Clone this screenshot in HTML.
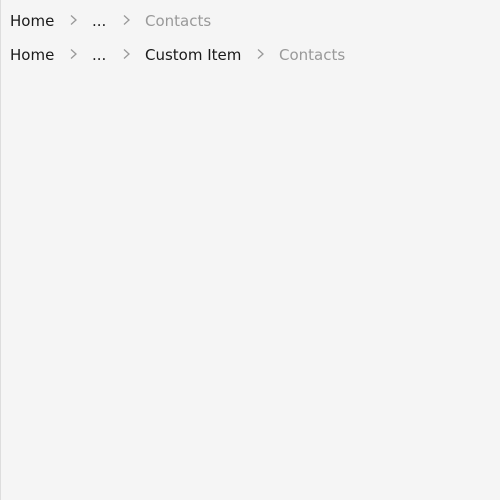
<!DOCTYPE html>
<html><head><style>
html,body{margin:0;width:500px;height:500px;background:#f5f5f5;overflow:hidden}
body{border-left:1px solid #ddd;box-sizing:border-box;position:relative;font-family:"DejaVu Sans",sans-serif;font-size:15px}
span{position:absolute;line-height:20px;white-space:nowrap}
.d{color:#1a1a1a}.g{color:#999}
svg{position:absolute}
</style></head><body>
<span class="d" style="left:9px;top:11px">Home</span>
<svg style="left:68px;top:14px" width="10" height="12"><path d="M2 1.5 L7 6 L2 10.5" fill="none" stroke="#999" stroke-width="1.3"/></svg>
<span class="d" style="left:91px;top:11px">...</span>
<svg style="left:121px;top:14px" width="10" height="12"><path d="M2 1.5 L7 6 L2 10.5" fill="none" stroke="#999" stroke-width="1.3"/></svg>
<span class="g" style="left:144px;top:11px">Contacts</span>

<span class="d" style="left:9px;top:45px">Home</span>
<svg style="left:68px;top:48px" width="10" height="12"><path d="M2 1.5 L7 6 L2 10.5" fill="none" stroke="#999" stroke-width="1.3"/></svg>
<span class="d" style="left:91px;top:45px">...</span>
<svg style="left:121px;top:48px" width="10" height="12"><path d="M2 1.5 L7 6 L2 10.5" fill="none" stroke="#999" stroke-width="1.3"/></svg>
<span class="d" style="left:144px;top:45px">Custom Item</span>
<svg style="left:255px;top:48px" width="10" height="12"><path d="M2 1.5 L7 6 L2 10.5" fill="none" stroke="#999" stroke-width="1.3"/></svg>
<span class="g" style="left:278px;top:45px">Contacts</span>
</body></html>
